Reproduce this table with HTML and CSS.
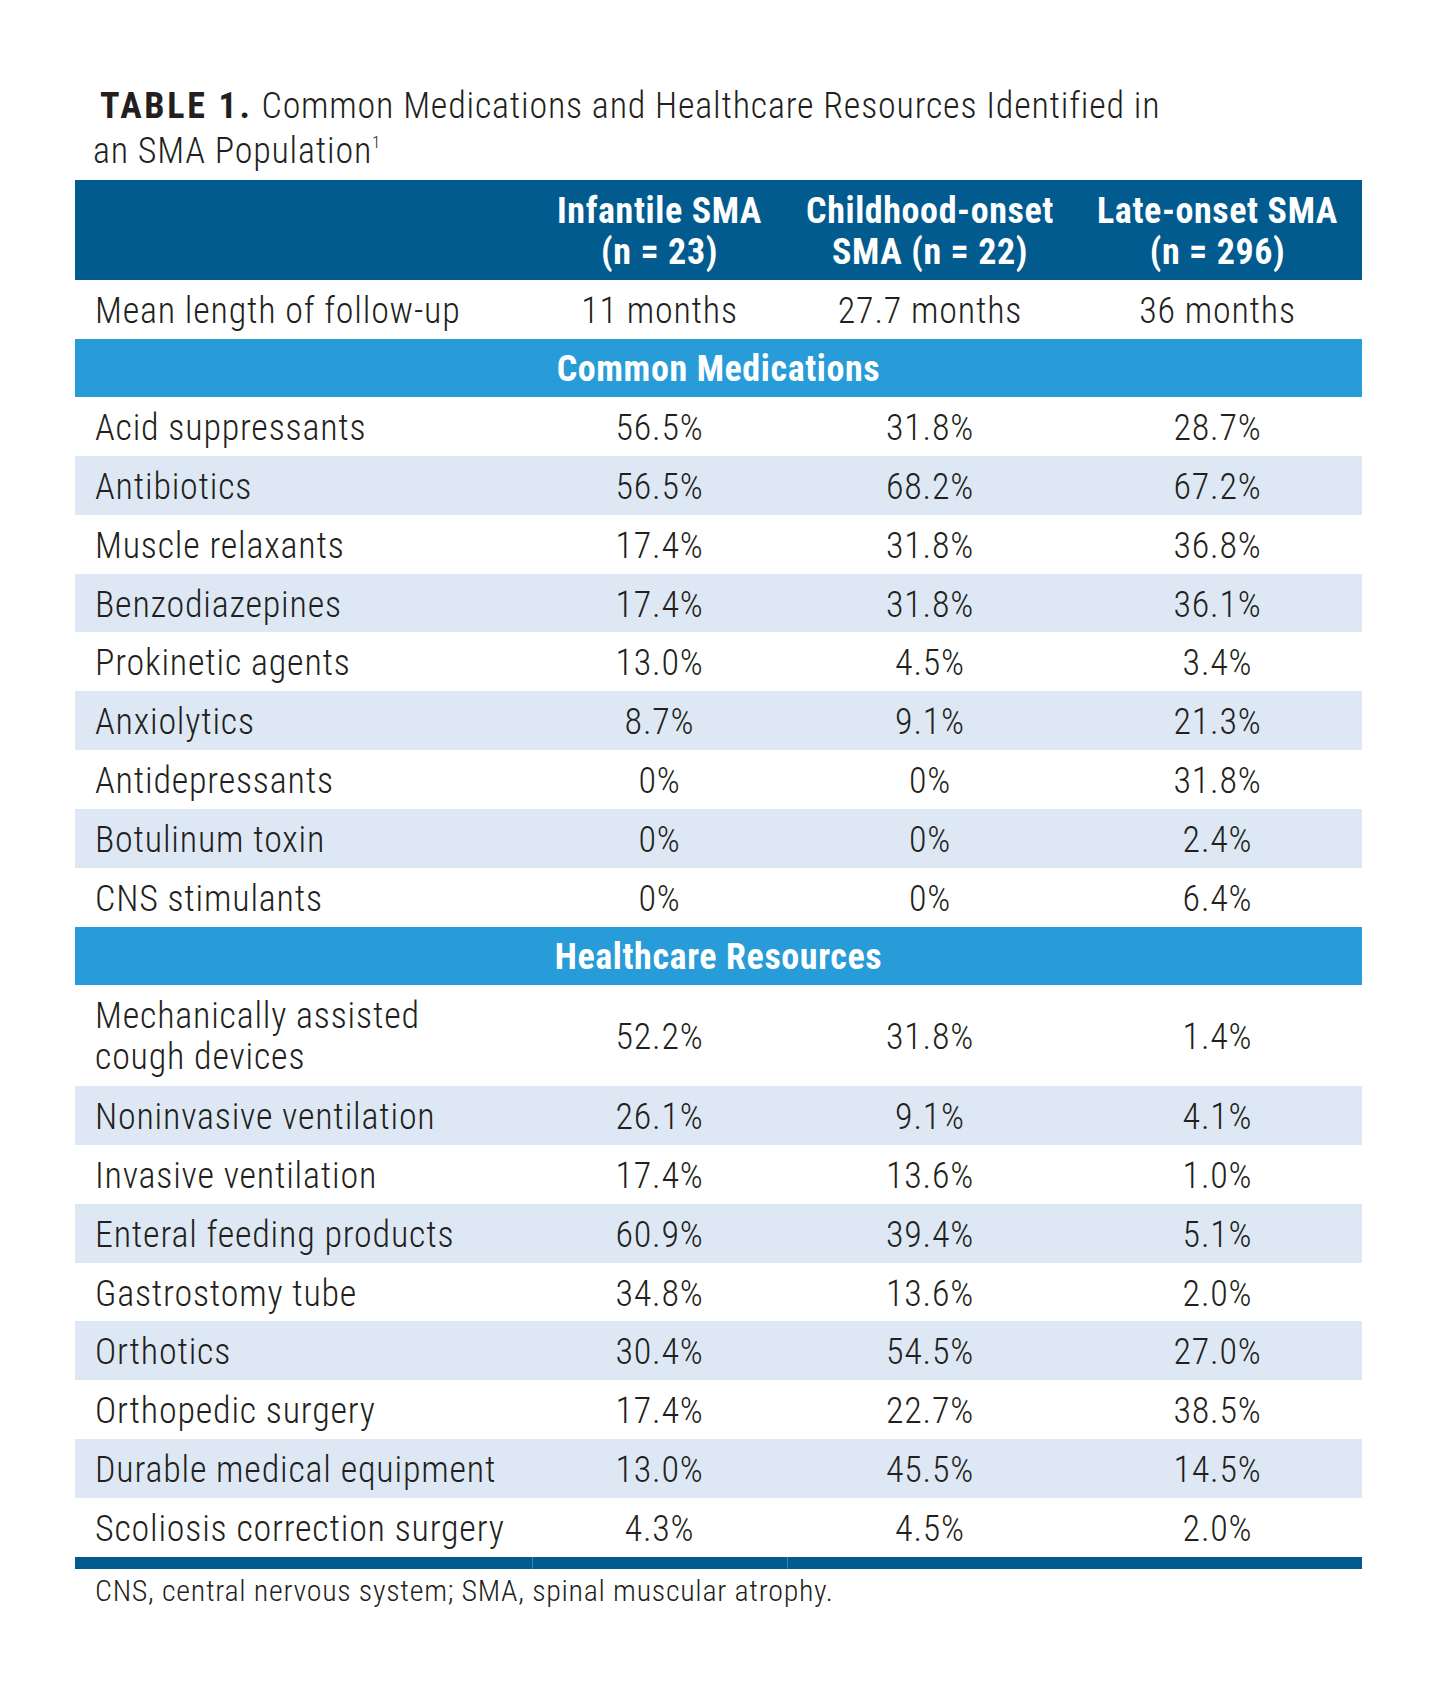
FILE: index.html
```html
<!DOCTYPE html>
<html>
<head>
<meta charset="utf-8">
<link rel="stylesheet" href="styles.css">
</head>
<body>
<div class="page">
  <h1 class="title"><span class="title-line1"><b class="label">TABLE 1.</b> Common Medications and Healthcare Resources Identified in</span>an SMA Population<sup class="ref">1</sup></h1>
  <table class="data">
    <colgroup>
      <col class="c1"><col class="c2"><col class="c3"><col class="c4">
    </colgroup>
    <thead>
      <tr class="head">
        <th></th>
        <th>Infantile SMA<br>(n = 23)</th>
        <th>Childhood-onset<br>SMA (n = 22)</th>
        <th>Late-onset SMA<br>(n = 296)</th>
      </tr>
    </thead>
    <tbody>
      <tr class="row"><td>Mean length of follow-up</td><td>11 months</td><td>27.7 months</td><td>36 months</td></tr>
      <tr class="band"><td colspan="4">Common Medications</td></tr>
      <tr class="row"><td>Acid suppressants</td><td>56.5%</td><td>31.8%</td><td>28.7%</td></tr>
      <tr class="row alt"><td>Antibiotics</td><td>56.5%</td><td>68.2%</td><td>67.2%</td></tr>
      <tr class="row"><td>Muscle relaxants</td><td>17.4%</td><td>31.8%</td><td>36.8%</td></tr>
      <tr class="row alt"><td>Benzodiazepines</td><td>17.4%</td><td>31.8%</td><td>36.1%</td></tr>
      <tr class="row"><td>Prokinetic agents</td><td>13.0%</td><td>4.5%</td><td>3.4%</td></tr>
      <tr class="row alt"><td>Anxiolytics</td><td>8.7%</td><td>9.1%</td><td>21.3%</td></tr>
      <tr class="row"><td>Antidepressants</td><td>0%</td><td>0%</td><td>31.8%</td></tr>
      <tr class="row alt"><td>Botulinum toxin</td><td>0%</td><td>0%</td><td>2.4%</td></tr>
      <tr class="row"><td>CNS stimulants</td><td>0%</td><td>0%</td><td>6.4%</td></tr>
      <tr class="band"><td colspan="4">Healthcare Resources</td></tr>
      <tr class="row tall"><td>Mechanically assisted<br>cough devices</td><td>52.2%</td><td>31.8%</td><td>1.4%</td></tr>
      <tr class="row alt"><td>Noninvasive ventilation</td><td>26.1%</td><td>9.1%</td><td>4.1%</td></tr>
      <tr class="row"><td>Invasive ventilation</td><td>17.4%</td><td>13.6%</td><td>1.0%</td></tr>
      <tr class="row alt"><td>Enteral feeding products</td><td>60.9%</td><td>39.4%</td><td>5.1%</td></tr>
      <tr class="row"><td>Gastrostomy tube</td><td>34.8%</td><td>13.6%</td><td>2.0%</td></tr>
      <tr class="row alt"><td>Orthotics</td><td>30.4%</td><td>54.5%</td><td>27.0%</td></tr>
      <tr class="row"><td>Orthopedic surgery</td><td>17.4%</td><td>22.7%</td><td>38.5%</td></tr>
      <tr class="row alt"><td>Durable medical equipment</td><td>13.0%</td><td>45.5%</td><td>14.5%</td></tr>
      <tr class="row"><td>Scoliosis correction surgery</td><td>4.3%</td><td>4.5%</td><td>2.0%</td></tr>
      <tr class="endbar"><td></td><td class="sep"></td><td class="sep"></td><td></td></tr>
    </tbody>
  </table>
  <p class="note">CNS, central nervous system; SMA, spinal muscular atrophy.</p>
</div>
</body>
</html>
```
FILE: styles.css
```css
html, body {
  margin: 0;
  padding: 0;
  background: #ffffff;
}

.page {
  padding: 84px 0 0 75px;
  width: 1287px;
  font-family: "Roboto Condensed", "Roboto", sans-serif;
  font-stretch: condensed;
  font-weight: 300;
  color: #231f20;
}

.title {
  margin: 0 0 6px 0;
  padding-left: 18px;
  font-size: 36px;
  line-height: 45px;
  font-weight: 300;
  letter-spacing: 0.8px;
}

.title-line1 {
  display: block;
  padding-left: 7px;
}

.label {
  font-weight: 700;
  letter-spacing: 2.7px;
}

.ref {
  font-size: 17px;
  line-height: 0;
  vertical-align: 15px;
  letter-spacing: 0;
}

.data {
  width: 1287px;
  table-layout: fixed;
  border-collapse: collapse;
  border-spacing: 0;
  font-size: 36px;
  letter-spacing: 0.8px;
  line-height: 41px;
}

.c1 { width: 457px; }
.c2 { width: 255px; }
.c3 { width: 286px; }
.c4 { width: 289px; }

.data td, .data th {
  padding: 4px 0 0 0;
  vertical-align: middle;
  text-align: center;
}

.head {
  height: 100px;
}

.head th {
  background: #025b8e;
  color: #ffffff;
  font-weight: 700;
  letter-spacing: 0.6px;
}

.row {
  height: 58.9px;
}

.row td:first-child {
  text-align: left;
  padding-left: 20px;
}

.row.tall {
  height: 101px;
}

.alt td {
  background: #dde8f4;
}

.band {
  height: 58px;
}

.band td {
  background: #289cd8;
  color: #ffffff;
  font-weight: 700;
  letter-spacing: 0.6px;
}

.endbar {
  height: 12px;
}

.endbar td {
  height: 12px;
  padding: 0;
  background: #025b8e;
}

.endbar td.sep {
  box-shadow: inset 1px 0 0 #3a82b3;
}

.note {
  margin: 4px 0 0 20px;
  font-size: 30px;
  line-height: 36px;
  letter-spacing: 0.7px;
}
```
